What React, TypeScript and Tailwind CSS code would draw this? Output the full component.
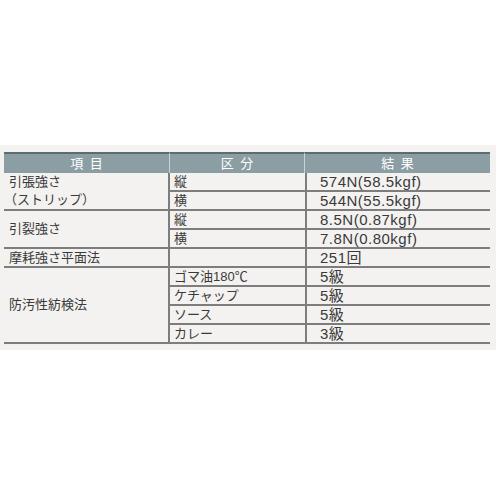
import React from "react";

const rows: { c1?: { text: string[]; span: number }; c2: string; c3: string }[] = [
  { c1: { text: ["引張強さ", "（ストリップ）"], span: 2 }, c2: "縦", c3: "574N(58.5kgf)" },
  { c2: "横", c3: "544N(55.5kgf)" },
  { c1: { text: ["引裂強さ"], span: 2 }, c2: "縦", c3: "8.5N(0.87kgf)" },
  { c2: "横", c3: "7.8N(0.80kgf)" },
  { c1: { text: ["摩耗強さ平面法"], span: 1 }, c2: "", c3: "251回" },
  { c1: { text: ["防汚性紡検法"], span: 4 }, c2: "ゴマ油180℃", c3: "5級" },
  { c2: "ケチャップ", c3: "5級" },
  { c2: "ソース", c3: "5級" },
  { c2: "カレー", c3: "3級" },
];

export default function App() {
  const rowIdx = 2;
  const cells: React.ReactNode[] = [];
  rows.forEach((r, i) => {
    const row = rowIdx + i;
    if (r.c1) {
      cells.push(
        <div
          key={`a${i}`}
          className="flex flex-col justify-center pl-[5px] border-b-2 border-r-2 border-[#7d7d7d] leading-[18px]"
          style={{ gridColumn: 1, gridRow: `${row} / span ${r.c1.span}` }}
        >
          {r.c1.text.map((t) => (
            <span key={t} className={t.startsWith("（") ? "-ml-[5px]" : ""}>
              {t}
            </span>
          ))}
        </div>
      );
    }
    cells.push(
      <div
        key={`b${i}`}
        className="flex items-center pl-[4px] border-b-2 border-[#7d7d7d] leading-none"
        style={{ gridColumn: 2, gridRow: row }}
      >
        {r.c2}
      </div>
    );
    cells.push(
      <div
        key={`c${i}`}
        className="flex items-center pl-[13px] border-b-2 border-l-2 border-[#7d7d7d] leading-none text-[15px] tracking-[0.5px]"
        style={{ gridColumn: 3, gridRow: row }}
      >
        {r.c3}
      </div>
    );
  });

  return (
    <div
      className="w-[500px] h-[500px] bg-white pt-[145px] text-[13px] text-[#3a3a3a]"
      style={{ fontFamily: '"Liberation Sans", "Noto Sans CJK JP", sans-serif' }}
    >
      <div className="w-[496px] h-[205px] bg-[#f3f2f0] pt-[7px] pl-[4px]">
        <div className="grid grid-cols-[166px_135px_185px] grid-rows-[21px_repeat(9,19px)] w-[486px]">
          <div className="bg-[#8b9ea4] border-t-2 border-[#5e6b6f] text-white font-normal flex items-center justify-center tracking-[0.5em] pl-[0.5em] border-r border-r-[#c9d3d6]">
            項目
          </div>
          <div className="bg-[#8b9ea4] border-t-2 border-[#5e6b6f] text-white font-normal flex items-center justify-center tracking-[0.5em] pl-[0.5em] border-r border-r-[#c9d3d6]">
            区分
          </div>
          <div className="bg-[#8b9ea4] border-t-2 border-[#5e6b6f] text-white font-normal flex items-center justify-center tracking-[0.5em] pl-[0.5em]">
            結果
          </div>
          {cells}
        </div>
      </div>
    </div>
  );
}
